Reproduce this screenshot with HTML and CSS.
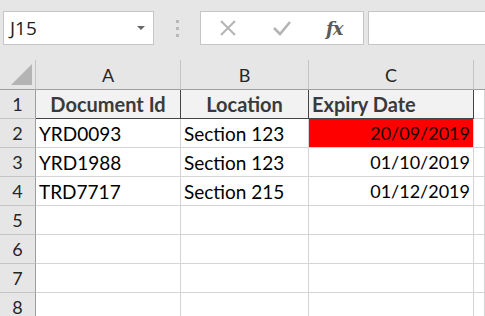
FILE: index.html
```html
<!DOCTYPE html>
<html lang="en">
<head>
  <meta charset="UTF-8">
  <title>Expiry Dates</title>
  <link rel="stylesheet" href="styles.css">
</head>
<body>
  <div class="toolbar">
    <div class="namebox">
      <span>J15</span>
      <span class="caret"></span>
    </div>
    <div class="grip"><i></i><i></i><i></i></div>
    <div class="fbuttons">
      <svg class="cancel" width="20" height="18" viewBox="0 0 20 18"><path d="M3 2 L17 16 M17 2 L3 16" stroke="#b4b4b4" stroke-width="2" fill="none"/></svg>
      <svg class="enter" width="22" height="18" viewBox="0 0 22 18"><path d="M3 9 L9 15 L19 3" stroke="#b4b4b4" stroke-width="2.6" fill="none"/></svg>
      <span class="fx">fx</span>
    </div>
    <div class="formula"></div>
  </div>

  <div class="sheet">
    <div class="corner"><span class="tri"></span></div>
    <div class="colhead">A</div>
    <div class="colhead">B</div>
    <div class="colhead">C</div>
    <div class="colhead last"></div>

    <div class="rowhead">1</div>
    <div class="cell title center">Document Id</div>
    <div class="cell title center">Location</div>
    <div class="cell title">Expiry Date</div>
    <div class="cell"></div>

    <div class="rowhead">2</div>
    <div class="cell">YRD0093</div>
    <div class="cell">Section 123</div>
    <div class="cell date expired">20/09/2019</div>
    <div class="cell"></div>

    <div class="rowhead">3</div>
    <div class="cell">YRD1988</div>
    <div class="cell">Section 123</div>
    <div class="cell date">01/10/2019</div>
    <div class="cell"></div>

    <div class="rowhead">4</div>
    <div class="cell">TRD7717</div>
    <div class="cell">Section 215</div>
    <div class="cell date">01/12/2019</div>
    <div class="cell"></div>

    <div class="rowhead">5</div>
    <div class="cell"></div>
    <div class="cell"></div>
    <div class="cell"></div>
    <div class="cell"></div>

    <div class="rowhead">6</div>
    <div class="cell"></div>
    <div class="cell"></div>
    <div class="cell"></div>
    <div class="cell"></div>

    <div class="rowhead">7</div>
    <div class="cell"></div>
    <div class="cell"></div>
    <div class="cell"></div>
    <div class="cell"></div>

    <div class="rowhead">8</div>
    <div class="cell"></div>
    <div class="cell"></div>
    <div class="cell"></div>
    <div class="cell"></div>
  </div>
</body>
</html>
```

FILE: styles.css
```css
body {
  margin: 0;
  width: 485px;
  height: 316px;
  overflow: hidden;
  background: #fff;
  font-family: Lato, "Open Sans", sans-serif;
  color: #000;
}

.toolbar {
  height: 60px;
  background: #e6e6e6;
  display: flex;
  align-items: flex-start;
  padding: 11px 0 0 3px;
  box-sizing: border-box;
}

.namebox {
  width: 151px;
  height: 34px;
  box-sizing: border-box;
  background: #fff;
  border: 1px solid #c6c6c6;
  display: flex;
  align-items: center;
  justify-content: space-between;
  padding: 0 8px 0 6px;
  font-family: "Open Sans", sans-serif;
  font-size: 19px;
  color: #222;
}

.caret {
  width: 0;
  height: 0;
  border-left: 4px solid transparent;
  border-right: 4px solid transparent;
  border-top: 4px solid #666;
}

.grip {
  width: 46px;
  display: flex;
  flex-direction: column;
  align-items: center;
  gap: 4px;
  padding-top: 9px;
}

.grip i {
  width: 3px;
  height: 3px;
  background: #b8b8b8;
}

.fbuttons {
  width: 164px;
  height: 34px;
  box-sizing: border-box;
  background: #fff;
  border: 1px solid #c6c6c6;
  display: flex;
  align-items: center;
  padding-left: 17px;
}

.enter {
  margin-left: 33px;
}

.fx {
  margin-left: 33px;
  font-family: "DejaVu Serif", serif;
  font-style: italic;
  font-weight: bold;
  font-size: 18px;
  color: #5a5a5a;
  letter-spacing: -1px;
}

.formula {
  flex: 1;
  height: 34px;
  margin-left: 4px;
  box-sizing: border-box;
  background: #fff;
  border: 1px solid #c6c6c6;
  border-right: none;
}

.sheet {
  display: grid;
  grid-template-columns: 36px 145px 128px 165px 1fr;
  grid-template-rows: 30px repeat(8, 29px);
}

.corner,
.colhead,
.rowhead {
  background: #e6e6e6;
  box-sizing: border-box;
  color: #262626;
  font-size: 18px;
  display: flex;
  align-items: center;
  justify-content: center;
}

.corner {
  border-right: 1px solid #c4c4c4;
  border-bottom: 1px solid #9e9e9e;
  position: relative;
}

.tri {
  position: absolute;
  right: 3px;
  bottom: 4px;
  width: 0;
  height: 0;
  border-left: 21px solid transparent;
  border-bottom: 21px solid #b4b4b4;
}

.colhead {
  border-right: 1px solid #c4c4c4;
  border-bottom: 1px solid #9e9e9e;
}

.colhead.last {
  border-right: none;
}

.rowhead {
  border-right: 1px solid #9e9e9e;
  border-bottom: 1px solid #c4c4c4;
}

.cell {
  box-sizing: border-box;
  border-right: 1px solid #d4d4d4;
  border-bottom: 1px solid #d4d4d4;
  font-size: 19px;
  padding: 0 3px;
  display: flex;
  align-items: center;
  white-space: nowrap;
}

.cell.title {
  background: #f2f2f2;
  font-weight: bold;
  font-size: 20px;
  color: #3a3a3a;
  border-right-color: #444;
  border-bottom-color: #444;
}

.cell.center {
  justify-content: center;
}

.cell.date {
  justify-content: flex-end;
  font-size: 18px;
}

.cell.expired {
  background: #ff0000;
  color: #1a0000;
}
```
